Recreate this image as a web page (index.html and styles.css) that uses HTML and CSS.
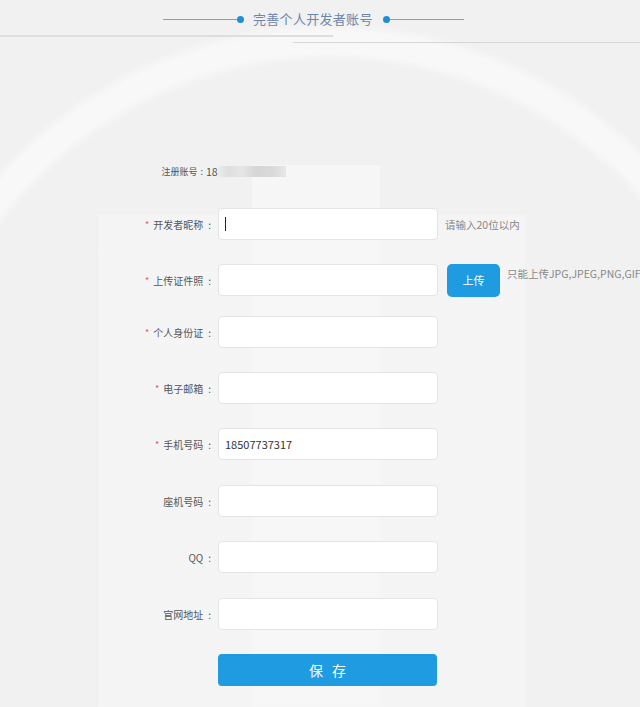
FILE: index.html
```html
<!DOCTYPE html>
<html lang="zh-CN">
<head>
<meta charset="utf-8">
<title>完善个人开发者账号</title>
<link rel="stylesheet" href="styles.css">
</head>
<body>
<div class="page">
  <header class="head">
    <div class="title-row">
      <span class="rule"></span><span class="dot"></span>
      <h1 class="title">完善个人开发者账号</h1>
      <span class="dot"></span><span class="rule"></span>
    </div>
    <div class="sep sep-left"></div>
    <div class="sep sep-right"></div>
  </header>

  <form class="form">
    <div class="row row-account">
      <label class="label">注册账号<b class="colon">:</b></label>
      <div class="account">18<span class="blur"></span></div>
    </div>
    <div class="row">
      <label class="label"><i class="req">*</i>开发者昵称<b class="colon">:</b></label>
      <div class="field"><input class="input" type="text"><span class="caret"></span></div>
      <span class="hint">请输入20位以内</span>
    </div>
    <div class="row row-tight">
      <label class="label"><i class="req">*</i>上传证件照<b class="colon">:</b></label>
      <div class="field"><input class="input" type="text"></div>
      <button class="upload" type="button">上传</button>
      <span class="hint hint-top">只能上传JPG,JPEG,PNG,GIF</span>
    </div>
    <div class="row">
      <label class="label"><i class="req">*</i>个人身份证<b class="colon">:</b></label>
      <div class="field"><input class="input" type="text"></div>
    </div>
    <div class="row">
      <label class="label"><i class="req">*</i>电子邮箱<b class="colon">:</b></label>
      <div class="field"><input class="input" type="text"></div>
    </div>
    <div class="row row-wide">
      <label class="label"><i class="req">*</i>手机号码<b class="colon">:</b></label>
      <div class="field"><input class="input" type="text" value="18507737317"></div>
    </div>
    <div class="row">
      <label class="label">座机号码<b class="colon">:</b></label>
      <div class="field"><input class="input" type="text"></div>
    </div>
    <div class="row row-wide">
      <label class="label">QQ<b class="colon">:</b></label>
      <div class="field"><input class="input" type="text"></div>
    </div>
    <div class="row">
      <label class="label">官网地址<b class="colon">:</b></label>
      <div class="field"><input class="input" type="text"></div>
    </div>
    <div class="row">
      <span class="label"></span>
      <button class="save" type="button">保 存</button>
    </div>
  </form>
</div>
</body>
</html>
```

FILE: styles.css
```css
html, body {
  margin: 0;
  padding: 0;
}
body {
  background: #f1f1f1;
  font-family: "Noto Sans CJK SC", "Noto Sans", sans-serif;
  color: #555;
  overflow: hidden;
}
.page {
  width: 640px;
  height: 707px;
  overflow: hidden;
  background:
    radial-gradient(circle at 330px 470px, rgba(255,255,255,0) 0, rgba(255,255,255,0) 408px, rgba(255,255,255,0.5) 418px, rgba(255,255,255,0.5) 438px, rgba(255,255,255,0) 448px),
    linear-gradient(90deg, transparent 252px, rgba(247,247,247,0.9) 252px, rgba(247,247,247,0.9) 380px, transparent 380px) 0 165px / 640px 542px no-repeat,
    linear-gradient(90deg, transparent 98px, rgba(245,245,245,0.9) 98px, rgba(245,245,245,0.9) 525px, transparent 525px) 0 215px / 640px 492px no-repeat,
    #f1f1f1;
}
.head {
  padding-top: 9px;
}
.title-row {
  display: flex;
  align-items: center;
  height: 20px;
  padding-left: 163px;
}
.rule {
  width: 74px;
  height: 1px;
  background: #6aaad4;
}
.dot {
  width: 7px;
  height: 7px;
  border-radius: 50%;
  background: #1d8fd6;
}
.title {
  margin: 0 10px 0 9px;
  font-size: 13px;
  font-weight: normal;
  color: #6b86ad;
  letter-spacing: 0.3px;
  line-height: 20px;
}
.sep {
  height: 2px;
  background: #dedede;
}
.sep-left {
  margin-top: 6px;
  width: 333px;
}
.sep-right {
  margin-top: 5px;
  margin-left: 293px;
  width: 347px;
  height: 1px;
  background: #d6d6d6;
}
.form {
  padding-top: 118px;
}
.row {
  display: flex;
  align-items: center;
  height: 32px;
  margin-bottom: 24px;
}
.row-tight {
  margin-bottom: 20px;
}
.row-wide {
  margin-bottom: 25px;
}
.row-account {
  height: 20px;
  margin-bottom: 27px;
}
.label {
  width: 211px;
  flex: none;
  text-align: right;
  font-size: 10px;
  color: #555;
  padding-right: 7px;
  box-sizing: content-box;
  white-space: nowrap;
}
.colon {
  font-weight: normal;
  margin-left: 5px;
}
.req {
  font-style: normal;
  color: #e25a5a;
  font-size: 9px;
  margin-right: 4px;
  position: relative;
  top: -1px;
}
.row-account .label {
  width: 203px;
  padding-right: 3px;
  font-size: 9px;
}
.row-account .colon {
  margin-left: 3px;
}
.account {
  display: flex;
  align-items: center;
  height: 20px;
  font-size: 10.5px;
  color: #555;
}
.blur {
  display: inline-block;
  width: 68px;
  height: 11px;
  background: linear-gradient(90deg, #ececec 0, #dedede 15%, #e6e6e6 35%, #d6d6d6 55%, #d9d9d9 80%, #e8e8e8 100%);
}
.field {
  width: 220px;
  height: 32px;
  flex: none;
  position: relative;
}
.input {
  box-sizing: border-box;
  width: 220px;
  height: 32px;
  border: 1px solid #e4e4e4;
  border-radius: 4px;
  background: #fff;
  padding: 0 6px;
  font-family: "Noto Sans CJK SC", "Noto Sans", sans-serif;
  font-size: 11px;
  color: #333;
  outline: none;
}
.caret {
  position: absolute;
  left: 7px;
  top: 9px;
  width: 1px;
  height: 14px;
  background: #222;
}
.hint {
  margin-left: 7px;
  font-size: 10.5px;
  color: #888;
  white-space: nowrap;
}
.hint-top {
  align-self: flex-start;
  margin-top: 2px;
}
.upload {
  margin-left: 9px;
  width: 53px;
  height: 33px;
  flex: none;
  border: none;
  border-radius: 5px;
  background: #1e9be1;
  color: #fff;
  font-family: "Noto Sans CJK SC", "Noto Sans", sans-serif;
  font-size: 11px;
  padding: 0;
}
.save {
  width: 219px;
  height: 32px;
  flex: none;
  border: none;
  border-radius: 4px;
  background: #1e9be1;
  color: #fff;
  font-family: "Noto Sans CJK SC", "Noto Sans", sans-serif;
  font-size: 14px;
  letter-spacing: 3px;
  text-indent: 3px;
  padding: 0;
}
```
